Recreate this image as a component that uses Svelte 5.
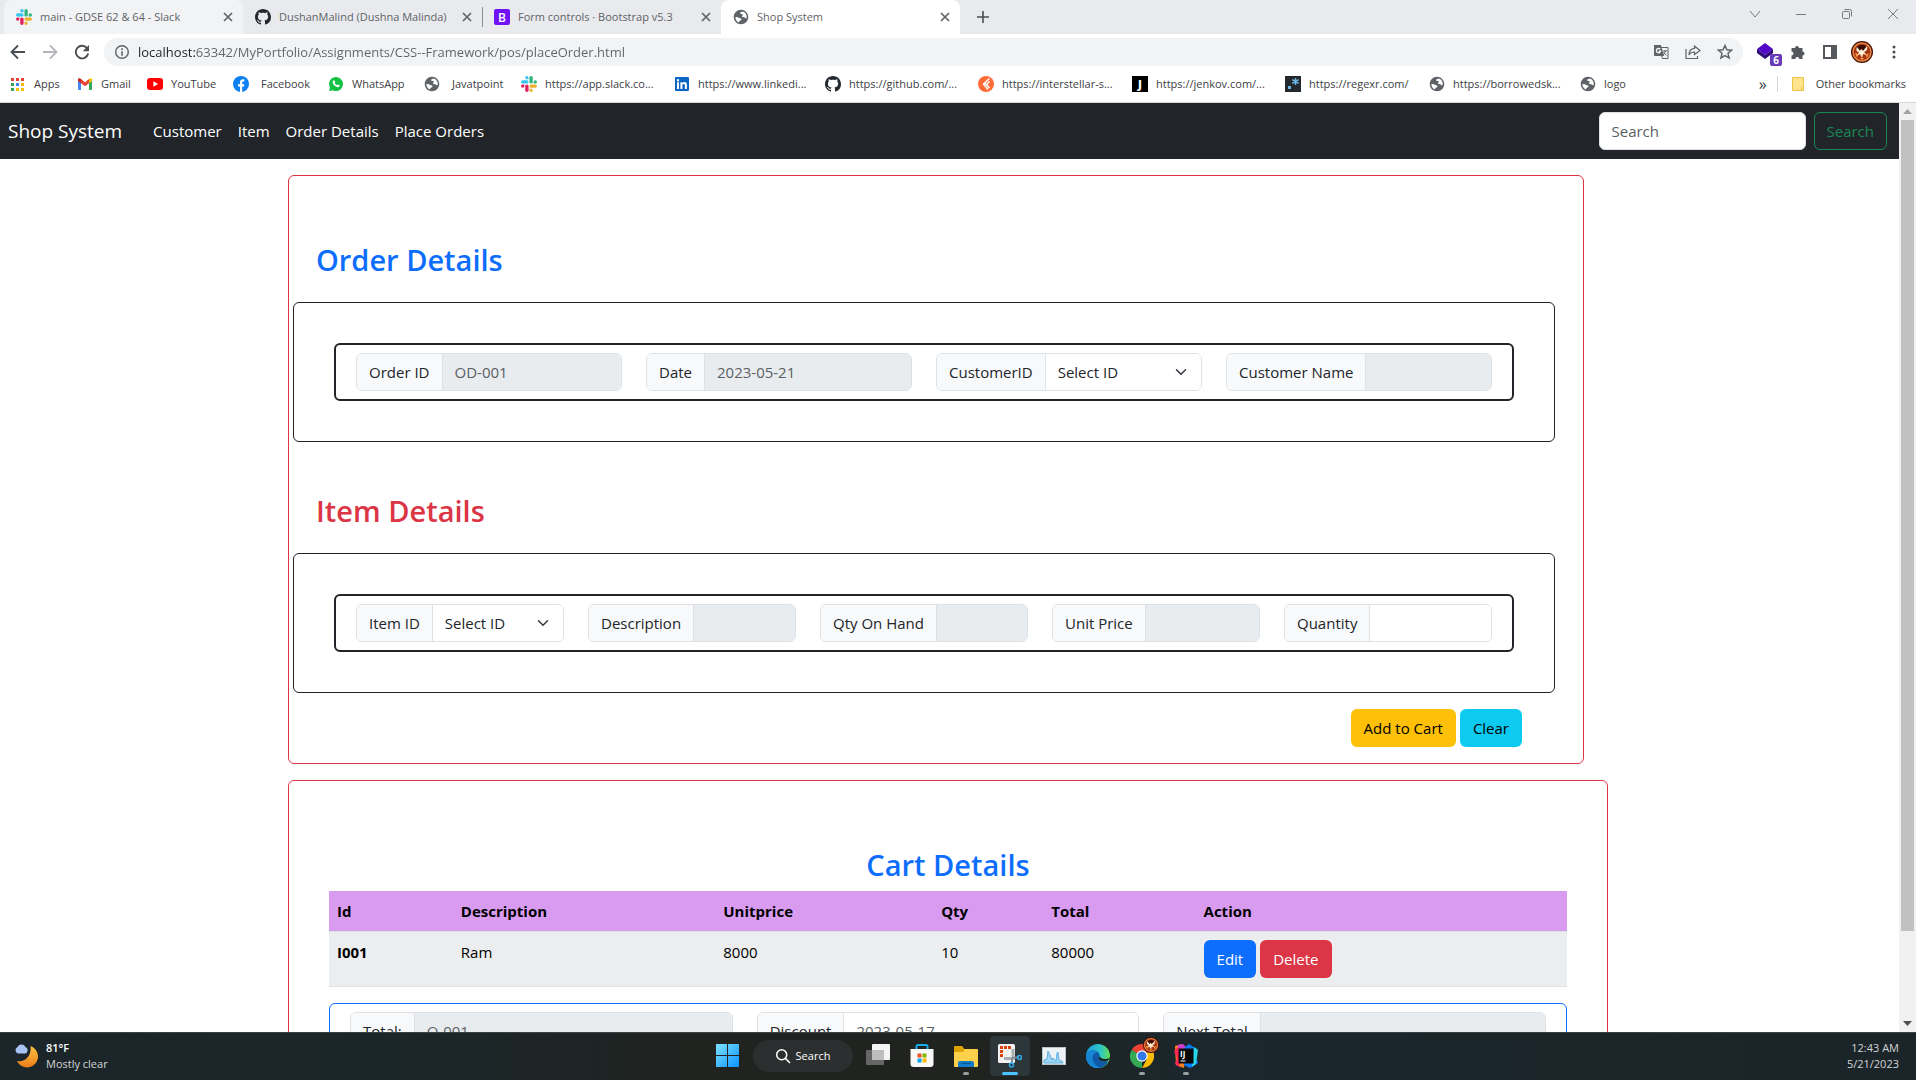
<script>
  const tabs = [
    { icon: 'slack', title: 'main - GDSE 62 & 64 - Slack', state: 'hovered' },
    { icon: 'github', title: 'DushanMalind (Dushna Malinda)', state: 'plain' },
    { icon: 'bootstrap', title: 'Form controls · Bootstrap v5.3', state: 'plain ruled' },
    { icon: 'globe', title: 'Shop System', state: 'active' },
  ];

  const bookmarks = [
    { icon: 'apps', title: 'Apps' },
    { icon: 'gmail', title: 'Gmail' },
    { icon: 'youtube', title: 'YouTube' },
    { icon: 'facebook', title: 'Facebook', wide: true },
    { icon: 'whatsapp', title: 'WhatsApp' },
    { icon: 'globe', title: 'Javatpoint', wide: true },
    { icon: 'slack', title: 'https://app.slack.co...' },
    { icon: 'linkedin', title: 'https://www.linkedi...' },
    { icon: 'github', title: 'https://github.com/...' },
    { icon: 'postman', title: 'https://interstellar-s...' },
    { icon: 'jenkov', title: 'https://jenkov.com/...' },
    { icon: 'regexr', title: 'https://regexr.com/' },
    { icon: 'globe', title: 'https://borrowedsk...' },
    { icon: 'globe', title: 'logo' },
  ];

  const navLinks = ['Customer', 'Item', 'Order Details', 'Place Orders'];

  const orderFields = [
    { id: 'order-id', label: 'Order ID', value: 'OD-001', kind: 'readonly' },
    { id: 'order-date', label: 'Date', value: '2023-05-21', kind: 'readonly' },
    { id: 'customer-id', label: 'CustomerID', value: 'Select ID', kind: 'select' },
    { id: 'customer-name', label: 'Customer Name', value: '', kind: 'readonly' },
  ];

  const itemFields = [
    { id: 'item-id', label: 'Item ID', value: 'Select ID', kind: 'select' },
    { id: 'description', label: 'Description', value: '', kind: 'readonly' },
    { id: 'qty-on-hand', label: 'Qty On Hand', value: '', kind: 'readonly' },
    { id: 'unit-price', label: 'Unit Price', value: '', kind: 'readonly' },
    { id: 'quantity', label: 'Quantity', value: '', kind: 'text' },
  ];

  const totalFields = [
    { id: 'total', label: 'Total:', value: 'O-001', kind: 'readonly' },
    { id: 'discount', label: 'Discount', value: '2023-05-17', kind: 'text' },
    { id: 'next-total', label: 'Next Total', value: '', kind: 'readonly' },
  ];

  const cart = [{ id: 'I001', description: 'Ram', price: 8000, qty: 10, total: 80000 }];

  const taskApps = [
    { icon: 'explorer', name: 'File Explorer', mark: 'running' },
    { icon: 'snip', name: 'Snipping Tool', mark: 'current' },
    { icon: 'monitor', name: 'Resource Monitor', mark: '' },
    { icon: 'edge', name: 'Edge', mark: '' },
    { icon: 'chrome', name: 'Chrome', mark: 'running' },
    { icon: 'idea', name: 'IntelliJ IDEA', mark: 'running' },
  ];
</script>

{#snippet glyph(name)}
  {#if name === 'slack'}
    <svg class="i16" viewBox="0 0 24 24">
      <path fill="#e01e5a" d="M5.042 15.165a2.528 2.528 0 0 1-2.52 2.523A2.528 2.528 0 0 1 0 15.165a2.527 2.527 0 0 1 2.522-2.52h2.52v2.52zM6.313 15.165a2.527 2.527 0 0 1 2.521-2.52 2.527 2.527 0 0 1 2.521 2.52v6.313A2.528 2.528 0 0 1 8.834 24a2.528 2.528 0 0 1-2.521-2.522v-6.313z" />
      <path fill="#36c5f0" d="M8.834 5.042a2.528 2.528 0 0 1-2.521-2.52A2.528 2.528 0 0 1 8.834 0a2.528 2.528 0 0 1 2.521 2.522v2.52H8.834zM8.834 6.313a2.528 2.528 0 0 1 2.521 2.521 2.528 2.528 0 0 1-2.521 2.521H2.522A2.528 2.528 0 0 1 0 8.834a2.528 2.528 0 0 1 2.522-2.521h6.312z" />
      <path fill="#2eb67d" d="M18.956 8.834a2.528 2.528 0 0 1 2.522-2.521A2.528 2.528 0 0 1 24 8.834a2.528 2.528 0 0 1-2.522 2.521h-2.522V8.834zM17.688 8.834a2.528 2.528 0 0 1-2.523 2.521 2.527 2.527 0 0 1-2.52-2.521V2.522A2.527 2.527 0 0 1 15.165 0a2.528 2.528 0 0 1 2.523 2.522v6.312z" />
      <path fill="#ecb22e" d="M15.165 18.956a2.528 2.528 0 0 1 2.523 2.522A2.528 2.528 0 0 1 15.165 24a2.527 2.527 0 0 1-2.52-2.522v-2.522h2.52zM15.165 17.688a2.527 2.527 0 0 1-2.52-2.523 2.526 2.526 0 0 1 2.52-2.52h6.313A2.527 2.527 0 0 1 24 15.165a2.528 2.528 0 0 1-2.522 2.523h-6.313z" />
    </svg>
  {:else if name === 'github'}
    <svg class="i16" viewBox="0 0 16 16"><path fill="#24292f" d="M8 0C3.58 0 0 3.58 0 8c0 3.54 2.29 6.53 5.47 7.59.4.07.55-.17.55-.38 0-.19-.01-.82-.01-1.49-2.01.37-2.53-.49-2.69-.94-.09-.23-.48-.94-.82-1.13-.28-.15-.68-.52-.01-.53.63-.01 1.08.58 1.23.82.72 1.21 1.87.87 2.33.66.07-.52.28-.87.51-1.07-1.78-.2-3.64-.89-3.64-3.95 0-.87.31-1.59.82-2.15-.08-.2-.36-1.02.08-2.12 0 0 .67-.21 2.2.82.64-.18 1.32-.27 2-.27s1.36.09 2 .27c1.53-1.04 2.2-.82 2.2-.82.44 1.1.16 1.92.08 2.12.51.56.82 1.27.82 2.15 0 3.07-1.87 3.75-3.65 3.95.29.25.54.73.54 1.48 0 1.07-.01 1.93-.01 2.2 0 .21.15.46.55.38A8.01 8.01 0 0016 8c0-4.42-3.58-8-8-8z" /></svg>
  {:else if name === 'bootstrap'}
    <svg class="i16" viewBox="0 0 16 16"><rect width="16" height="16" rx="2" fill="#7012f5" /><text x="8" y="12.5" text-anchor="middle" font-size="12" font-weight="600" fill="#fff">B</text></svg>
  {:else if name === 'globe'}
    <svg class="i16" viewBox="1 1 22 22"><circle cx="12" cy="12" r="9" fill="#fff" /><path fill="#5f6368" d="M12 2C6.48 2 2 6.48 2 12s4.48 10 10 10 10-4.48 10-10S17.52 2 12 2zM4.2 12.4c1.6-.5 3.400-.2 4.800.5 1.200.6 1.800 1 2.800 1.200.9.2 1.300.9.7 1.700-.6.9-1.900 1.100-2.600 1.800-.5.600-.4 1.400-.7 2C6.400 18.500 4.400 15.700 4.200 12.400zM19.600 13.800c-1.300.3-2.100-.5-3-1.300-.8-.7-1.900-.6-2.800-1-.7-.3-.7-1.200 0-1.600.8-.4 1-.8.500-1.500-.7-.8-2.200-.1-3-.8-.8-.8-.1-1.900.8-2.400 1-.5 2.300-.6 3.300-.4 2.600 1.200 4.500 3.800 4.500 7 0 .7-.1 1.400-.3 2z" /></svg>
  {:else if name === 'apps'}
    <svg class="i16" viewBox="0 0 16 16">
      <path fill="#ea4335" d="M1 2h3v3H1zM6 2h3v3H6zM11 2h3v3h-3z" /><path fill="#34a853" d="M1 7h3v3H1zM1 12h3v3H1z" /><path fill="#4285f4" d="M6 7h3v3H6z" /><path fill="#fbbc04" d="M11 7h3v3h-3zM6 12h3v3H6zM11 12h3v3h-3z" />
    </svg>
  {:else if name === 'gmail'}
    <svg class="i16" viewBox="0 0 16 16"><path fill="#4285f4" d="M1 4.500l3 2.300V14H2a1 1 0 0 1-1-1z" /><path fill="#34a853" d="M12 6.800l3-2.300V13a1 1 0 0 1-1 1h-2z" /><path fill="#ea4335" d="M4 3l4 3.200L12 3v4.200l-4 3.100-4-3.100z" /><path fill="#c5221f" d="M1 3.800C1 2.300 2.500 1.900 4 3v4.200L1 5z" /><path fill="#fbbc04" d="M15 3.800C15 2.300 13.500 1.900 12 3v4.200L15 5z" /></svg>
  {:else if name === 'youtube'}
    <svg class="i16" viewBox="0 0 16 16"><rect y="2" width="16" height="12" rx="3" fill="#f00" /><path fill="#fff" d="M6.400 5.300v5.400L11 8z" /></svg>
  {:else if name === 'facebook'}
    <svg class="i16" viewBox="0 0 16 16"><circle cx="8" cy="8" r="8" fill="#0d80f2" /><path fill="#fff" d="M7 16v-5.400H5V8.200h2V6.400c0-2 1.200-3.100 3-3.100.8 0 1.400.1 1.400.1v2h-1c-.9 0-1.200.6-1.200 1.200v1.600h2.200l-.4 2.400H9.200V16z" /></svg>
  {:else if name === 'whatsapp'}
    <svg class="i16" viewBox="0 0 16 16"><path fill="#12c143" d="M8 1a7 7 0 1 1-3.300 13.200L1 15l1-3.500A7 7 0 0 1 8 1z" /><path fill="#fff" d="M5.600 4.300c.5-.3.900-.1 1.100.4l.5 1.200c.1.400-.7 1-.6 1.200.5 1 1.300 1.700 2.300 2.200.3.100.8-.9 1.200-.7l1.400.7c.5.300-.2 1.900-1.500 2-1.900.1-5-2.300-5.300-4.700-.1-1 .3-1.900.9-2.300z" /></svg>
  {:else if name === 'linkedin'}
    <svg class="i16" viewBox="0 0 16 16"><rect x="1" y="1" width="14" height="14" rx="1" fill="#0a66c2" /><path fill="#fff" d="M3 6.300h2V13H3zM4 3a1.200 1.200 0 1 1 0 2.400A1.200 1.200 0 0 1 4 3zM6.400 6.300h1.900v.9c.4-.7 1.100-1.100 2-1.100 2 0 2.600 1.200 2.600 3V13h-2V9.600c0-.9-.2-1.700-1.100-1.700-1 0-1.400.7-1.400 1.700V13h-2z" /></svg>
  {:else if name === 'postman'}
    <svg class="i16" viewBox="0 0 16 16"><circle cx="8" cy="8" r="8" fill="#ff6c37" /><path fill="none" stroke="#fff" stroke-width="1.500" d="M11.500 2.500L5.500 8l4.500 5.500M11.500 5.500L8.500 8.500l3 3.500M5.500 8H8" /></svg>
  {:else if name === 'jenkov'}
    <svg class="i16" viewBox="0 0 16 16"><rect width="16" height="16" fill="#000" /><text x="8" y="12" text-anchor="middle" font-size="11" font-weight="800" fill="#fff">J</text></svg>
  {:else if name === 'regexr'}
    <svg class="i16" viewBox="0 0 16 16"><rect width="16" height="16" fill="#23272e" /><path fill="#6cb8e8" d="M3 10h3v3H3z" /><path stroke="#6cb8e8" stroke-width="1.500" d="M10.500 2v7M7.300 3.700l6.400 3.600M13.700 3.700L7.300 7.300" /></svg>
  {:else if name === 'close'}
    <svg class="i16" viewBox="0 0 16 16"><path stroke="#5f6368" stroke-width="1.700" d="M4 4l8 8M12 4l-8 8" /></svg>
  {:else if name === 'start'}
    <svg class="i24" viewBox="0 0 24 24"><defs><linearGradient id="win" x1="0" y1="0" x2="1" y2="1"><stop offset="0" stop-color="#7fe0ff" /><stop offset="1" stop-color="#0a94ff" /></linearGradient></defs><path fill="url(#win)" d="M0 0h11v11H0zM12 0h11v11H12zM0 12h11v11H0zM12 12h11v11H12z" /></svg>
  {:else if name === 'taskview'}
    <svg class="i24" viewBox="0 0 24 24"><rect x="6" y="0" width="18" height="16" rx="1" fill="#f4f4f4" /><rect x="0" y="6" width="18" height="15" rx="1" fill="#666" /><path fill="#bdbdbd" d="M6 6h12v10H6z" /></svg>
  {:else if name === 'store'}
    <svg class="i24" viewBox="0 0 24 24"><path fill="none" stroke="#12aef2" stroke-width="2" d="M6.500 6V2.500a1.500 1.500 0 0 1 1.500-1.500h8a1.500 1.500 0 0 1 1.500 1.500V6" /><path fill="#f7f7f7" d="M.5 5h23v15a3 3 0 0 1-3 3h-17a3 3 0 0 1-3-3z" /><path fill="#f25022" d="M7.500 9.500h4v4h-4z" /><path fill="#7fba00" d="M12.500 9.500h4v4h-4z" /><path fill="#00a4ef" d="M7.500 14.500h4v4h-4z" /><path fill="#ffb900" d="M12.500 14.500h4v4h-4z" /></svg>
  {:else if name === 'explorer'}
    <svg class="i24" viewBox="0 0 24 24"><path fill="#dca200" d="M0 3a1 1 0 0 1 1-1h7l2.500 3H23v5H0z" /><path fill="#ffd049" d="M0 8h9l2-3h12a1 1 0 0 1 1 1v16a1 1 0 0 1-1 1H1a1 1 0 0 1-1-1z" /><path fill="#117bc8" d="M4 23v-4a2 2 0 0 1 2-2h12a2 2 0 0 1 2 2v4z" /><path fill="#075493" d="M7 19h10v1H7z" /></svg>
  {:else if name === 'snip'}
    <svg class="i24" viewBox="0 0 24 24"><rect width="17" height="19" rx="1.500" fill="#f2f2f2" /><path fill="none" stroke="#d8410b" stroke-width="3" stroke-dasharray="3 1" d="M13 3.500H3.500V14" /><path fill="none" stroke="#a7adb1" stroke-width="3" d="M15 5v9.500H6" /><path stroke="#858d92" stroke-width="2" d="M14 14l7-1M14 14l0 6" /><circle cx="21.500" cy="13.500" r="2" fill="none" stroke="#33a7e8" stroke-width="1.600" /><circle cx="13.500" cy="21" r="2" fill="none" stroke="#33a7e8" stroke-width="1.600" /></svg>
  {:else if name === 'monitor'}
    <svg class="i24" viewBox="0 0 24 24"><rect x=".5" y="3.500" width="23" height="17" fill="#edf2f7" stroke="#b9c3cc" /><path fill="#9dd4f5" stroke="#5fb0e2" d="M2 19v-3l3-1 1-8 2 4 2 5 1-2 3 3 1-8 1-1 1 8 4 2v1z" /></svg>
  {:else if name === 'edge'}
    <svg class="i24" viewBox="0 0 24 24"><defs><linearGradient id="edge-top" x1="0" x2="1"><stop offset="0" stop-color="#1b9de2" /><stop offset=".6" stop-color="#2cc6c9" /><stop offset="1" stop-color="#62dc52" /></linearGradient></defs><circle cx="12" cy="12" r="12" fill="url(#edge-top)" /><path fill="#0f59a8" d="M0 12c0-3.500 4-6 8-5.500 4 .5 6 3 5.500 5.500-.2 1-.9 1.200-.9 2.300 0 1.400 2.400 3.200 5.400 3.200 2 0 3.600-.8 4.500-1.300C20.500 21 16.500 24 12 24 5 24 0 18.500 0 12z" /><path fill="#1785d4" d="M0 12c0-3.500 4-6 8-5.500 2 .2 3.500 1 4.500 2-5-.5-7 4-5.500 8 1 3.500 4 6 7 7.200C6 25.500 0 19.500 0 12z" /><path fill="#1b262b" d="M13.500 12c-.2 1-.9 1.200-.9 2.300 0 1.400 2.400 3.200 5.400 3.200 2.800 0 5.500-1.500 5.900-4.500-1.200 1.500-3 2.200-5.400 2-2.600-.2-4.200-1.300-5-3z" /></svg>
  {:else if name === 'chrome'}
    <svg class="i24" viewBox="0 0 24 24"><path fill="#ea4335" d="M12 12L1.600 6A12 12 0 0 1 22.400 6z" /><path fill="#34a853" d="M12 12v12A12 12 0 0 1 1.600 6z" /><path fill="#fbbc04" d="M12 12l10.400-6A12 12 0 0 1 12 24l5-9z" /><circle cx="12" cy="12" r="5.700" fill="#fff" /><circle cx="12" cy="12" r="4.500" fill="#3379ec" /></svg>
  {:else if name === 'idea'}
    <svg class="i24" viewBox="0 0 24 24"><path fill="#fc801d" d="M1 2l7-2 5 4-3 20-8-3z" /><path fill="#fe2857" d="M0 7l6-6 5 9-6 11 2 3-6-4 2-6z" /><path fill="#c93bd0" d="M3 1l6-1 4 4-6 3z" /><path fill="#087cfa" d="M10 4l5-4 9 6-3 5 3 8-8 5-6-3z" /><path fill="#27d6e5" d="M20 3l4 3-2 14-4 3z" /><path d="M4.500 4.500h15v15h-15z" fill="#080808" /><text x="6" y="13" font-size="8" font-weight="700" fill="#fff">IJ</text><path fill="#fff" d="M6.500 16.500h5v1h-5z" /></svg>
  {/if}
{/snippet}

{#snippet avatar(size)}
  <svg class={size} viewBox="0 0 22 22"><circle cx="11" cy="11" r="11" fill="#4a0d05" /><circle cx="11" cy="11" r="9" fill="#a83210" stroke="#e58a45" stroke-width="1.500" /><path fill="#3a0a05" d="M11 4a7 7 0 0 1 6 3l-4 3-2-2-3 3-3-4a7 7 0 0 1 6-3z" /><path fill="#fff3d8" d="M6 6l3 4 1-2 2 2 4-5c1 3 0 5-3 6l3 3-4-1-1 4-2-4-3 2 2-4C5 11 5 8 6 6z" /><path fill="#ffa64d" d="M4 12l3 1-1 4zM18 12l-3 2 1 3zM9 17h4l-2 2z" /></svg>
{/snippet}

{#snippet field(f)}
  <div class="group">
    <label for={f.id}>{f.label}</label>
    {#if f.kind === 'select'}
      <div class="pick">
        <select id={f.id}><option>{f.value}</option></select>
        <svg viewBox="0 0 16 16"><path fill="none" stroke="#343a40" stroke-linecap="round" stroke-linejoin="round" stroke-width="2" d="m2 5 6 6 6-6" /></svg>
      </div>
    {:else}
      <input id={f.id} type="text" placeholder={f.value} disabled={f.kind === 'readonly'} />
    {/if}
  </div>
{/snippet}

<div class="screen">
  <header class="browser">
    <div class="tabstrip">
      {#each tabs as tab}
        <div class="tab {tab.state}">
          {@render glyph(tab.icon)}
          <button class="title">{tab.title}</button>
          <button class="bare" aria-label="Close tab">{@render glyph('close')}</button>
        </div>
      {/each}
      <button class="bare newtab" aria-label="New tab"><svg class="i16" viewBox="0 0 16 16"><path stroke="#4a4d51" stroke-width="1.600" d="M8 2v12M2 8h12" /></svg></button>
      <div class="window">
        <button class="bare" aria-label="Search tabs"><svg class="i12" viewBox="0 0 12 12"><path d="M1 3l5 6 5-6" /></svg></button>
        <button class="bare" aria-label="Minimize"><svg class="i12" viewBox="0 0 12 12"><path d="M1 6.500h10" /></svg></button>
        <button class="bare" aria-label="Restore"><svg class="i12" viewBox="0 0 12 12"><rect x="1.500" y="3.500" width="7" height="7" rx="1" /><path d="M3.500 1.500h5a2 2 0 0 1 2 2v5" /></svg></button>
        <button class="bare" aria-label="Close"><svg class="i12" viewBox="0 0 12 12"><path d="M1 1l10 10M11 1L1 11" /></svg></button>
      </div>
    </div>

    <div class="toolbar">
      <button class="bare tool" aria-label="Back"><svg class="i16" viewBox="0 0 16 16"><path fill="none" stroke="#4a4d51" stroke-width="1.800" d="M15 8H2M8 1.500L1.500 8 8 14.500" /></svg></button>
      <button class="bare tool" aria-label="Forward"><svg class="i16" viewBox="0 0 16 16"><path fill="none" stroke="#b4b6b9" stroke-width="1.800" d="M1 8h13M8 1.500L14.500 8 8 14.500" /></svg></button>
      <button class="bare tool" aria-label="Reload"><svg class="i16" viewBox="0 0 16 16"><path fill="none" stroke="#4a4d51" stroke-width="1.900" d="M13.300 4.500A6.300 6.300 0 1 0 14.200 9.500" /><path fill="#4a4d51" d="M15 1v6.300H8.700z" /></svg></button>
      <div class="omnibox">
        <svg class="i16" viewBox="0 0 16 16"><circle cx="8" cy="8" r="6.300" fill="none" stroke="#5f6368" stroke-width="1.400" /><path fill="#5f6368" d="M7.200 4.300h1.600v1.600H7.200zM7.200 7.200h1.600v4.500H7.200z" /></svg>
        <input type="text" aria-label="Address" value="localhost:63342/MyPortfolio/Assignments/CSS--Framework/pos/placeOrder.html" />
        <button class="bare tool" aria-label="Translate"><svg class="i16" viewBox="0 0 16 16"><path fill="#5f6368" d="M1 1h7l3 11H2a1 1 0 0 1-1-1z" /><path fill="none" stroke="#5f6368" d="M8 3.500h7v11H9.500l-1-3M10 7h4M12 6v1c0 2-1 3-2 4M10.500 8.500l3 3" /><path fill="none" stroke="#fff" stroke-width="1.200" d="M7.300 5.200a2.200 2.200 0 1 0 .4 2H5.500" /></svg></button>
        <button class="bare tool" aria-label="Share"><svg class="i16" viewBox="0 0 16 16"><path fill="none" stroke="#5f6368" stroke-width="1.200" d="M1 5v9.500h11.500V12M9.500 2l5.500 4.500-5.500 4V8C7 8 5 9 4 11c0-4 2-6.300 5.500-6.600z" /></svg></button>
        <button class="bare tool" aria-label="Bookmark"><svg class="i16" viewBox="0 0 16 16"><path fill="none" stroke="#5f6368" stroke-width="1.500" d="M8 1.500l1.900 4.300 4.700.4-3.600 3.100 1.100 4.600L8 11.500l-4.100 2.400L5 9.300 1.400 6.200l4.700-.4z" /></svg></button>
      </div>
      <button class="bare tool ext" aria-label="Extension, 6 alerts"><svg class="i20" viewBox="0 0 20 20"><path fill="#5208c9" d="M9 1l8 6-8 6-8-6z" /><path fill="#2f0b75" d="M1 7l8 6 8-6v4l-8 6-8-6z" /></svg><span class="badge">6</span></button>
      <button class="bare tool" aria-label="Extensions"><svg class="i16" viewBox="0 0 16 16"><path fill="#55585c" d="M1.500 4H5a2 2 0 1 1 4 0h3.500v3.500a2 2 0 1 1 0 4V15H9.300a2 2 0 0 0-4 0H1.500v-3.500a2 2 0 0 0 0-4z" /></svg></button>
      <button class="bare tool" aria-label="Side panel"><svg class="i16" viewBox="0 0 16 16"><path fill="none" stroke="#55585c" stroke-width="2" d="M2 2h12v12H2z" /><path fill="#55585c" d="M9 2h5v12H9z" /></svg></button>
      <button class="bare tool" aria-label="Profile">{@render avatar('i22')}</button>
      <button class="bare tool" aria-label="Menu"><svg class="i16" viewBox="0 0 16 16"><g fill="#4a4d51"><circle cx="8" cy="3" r="1.500" /><circle cx="8" cy="8" r="1.500" /><circle cx="8" cy="13" r="1.500" /></g></svg></button>
    </div>

    <nav class="bookmarks" aria-label="Bookmarks">
      <div class="marks">
        {#each bookmarks as mark}
          <a href="#top" class:wide={mark.wide}>{@render glyph(mark.icon)}<span>{mark.title}</span></a>
        {/each}
      </div>
      <button class="bare more" aria-label="More bookmarks">»</button>
      <a href="#top" class="other"><svg class="i16" viewBox="0 0 16 16"><path fill="#ffe38f" stroke="#ecc546" d="M2.500 1.500h11v13h-11zM11.500 10.500v4" /></svg><span>Other bookmarks</span></a>
    </nav>
  </header>

  <div class="viewport">
    <div class="page" id="top">
      <nav class="navbar">
        <a class="brand" href="#top">Shop System</a>
        {#each navLinks as link}<a href="#top">{link}</a>{/each}
        <form class="search">
          <input type="search" placeholder="Search" aria-label="Search" />
          <button type="button">Search</button>
        </form>
      </nav>

      <main>
        <section class="card entry">
          <h2 class="blue">Order Details</h2>
          <div class="frame"><div class="fields four">{#each orderFields as f}{@render field(f)}{/each}</div></div>
          <h2 class="red">Item Details</h2>
          <div class="frame"><div class="fields five">{#each itemFields as f}{@render field(f)}{/each}</div></div>
          <div class="actions">
            <button class="btn warning">Add to Cart</button>
            <button class="btn info">Clear</button>
          </div>
        </section>

        <section class="card cart">
          <h2 class="blue">Cart Details</h2>
          <table>
            <colgroup><col class="c-id" /><col class="c-desc" /><col class="c-price" /><col class="c-qty" /><col class="c-total" /><col /></colgroup>
            <thead>
              <tr><th>Id</th><th>Description</th><th>Unitprice</th><th>Qty</th><th>Total</th><th>Action</th></tr>
            </thead>
            <tbody>
              {#each cart as row}
                <tr>
                  <th scope="row">{row.id}</th><td>{row.description}</td><td>{row.price}</td><td>{row.qty}</td><td>{row.total}</td>
                  <td><div class="rowbtns"><button class="btn primary">Edit</button><button class="btn danger">Delete</button></div></td>
                </tr>
              {/each}
            </tbody>
          </table>
          <div class="totals">{#each totalFields as f}{@render field(f)}{/each}</div>
        </section>
      </main>
    </div>

    <div class="scrollbar" aria-hidden="true">
      <svg viewBox="0 0 17 17"><path fill="#a3a3a3" d="M4 11l4.500-5 4.500 5z" /></svg>
      <div class="thumb"></div>
      <svg viewBox="0 0 17 17"><path fill="#505050" d="M4 6l4.500 5L13 6z" /></svg>
    </div>
  </div>

  <footer class="taskbar">
    <div class="weather">
      <svg class="i24" viewBox="0 0 24 24"><defs><linearGradient id="moon" x1="0" y1="0" x2="0" y2="1"><stop offset="0" stop-color="#f9c440" /><stop offset="1" stop-color="#ee7c1b" /></linearGradient></defs><path fill="url(#moon)" d="M16.500 2A11 11 0 1 1 3 17C11 19 18 11 16.500 2z" /><path fill="#a9c3f5" d="M4 9.500a3.500 3.500 0 0 1-.5-6.500 4.500 4.500 0 0 1 8 0 3.400 3.400 0 0 1-.5 6.500z" /></svg>
      <div><strong>81°F</strong><span>Mostly clear</span></div>
    </div>
    <div class="apps">
      <button class="bare app" aria-label="Start">{@render glyph('start')}</button>
      <button class="find"><svg class="i16" viewBox="0 0 16 16"><circle cx="6.700" cy="6.700" r="5" fill="none" stroke="#fff" stroke-width="1.500" /><path stroke="#fff" stroke-width="1.700" stroke-linecap="round" d="M10.500 10.500L14.500 14.500" /></svg>Search</button>
      <button class="bare app" aria-label="Task view">{@render glyph('taskview')}</button>
      <button class="bare app" aria-label="Microsoft Store">{@render glyph('store')}</button>
      {#each taskApps as app}
        <button class="bare app {app.mark}" aria-label={app.name}>
          {@render glyph(app.icon)}
          {#if app.icon === 'chrome'}<span class="face">{@render avatar('i16')}</span>{/if}
        </button>
      {/each}
    </div>
    <div class="clock"><span>12:43 AM</span><span>5/21/2023</span></div>
  </footer>
</div>

<style>
  :global(body) { margin: 0; background: #fff; }
  .screen, .screen * { box-sizing: border-box; }
  .screen { height: 100vh; display: flex; flex-direction: column; overflow: hidden; font-family: 'Open Sans', 'Noto Sans', sans-serif; font-size: 15px; line-height: 24px; color: #212529; }
  button, input, select { font: inherit; color: inherit; margin: 0; min-width: 0; }
  a { color: inherit; text-decoration: none; }
  svg { display: block; flex: none; }
  .i12 { width: 12px; height: 12px; }
  .i16 { width: 16px; height: 16px; }
  .i20 { width: 20px; height: 20px; }
  .i22 { width: 22px; height: 22px; }
  .i24 { width: 24px; height: 24px; }
  .bare { border: 0; background: none; padding: 0; display: grid; place-items: center; flex: none; }

  .browser { flex: none; background: #fff; border-bottom: 1px solid #d5d7da; font-size: 11px; line-height: 16px; color: #3c4043; }
  .tabstrip { height: 34px; display: flex; background: #e8eaed; padding-left: 4px; }
  .tab { width: 239px; display: flex; align-items: center; gap: 8px; padding: 0 7px 0 12px; border-radius: 8px 8px 0 0; }
  .tab.hovered { background: #f2f3f5; }
  .tab.active { background: #fff; }
  .tab.ruled { background: linear-gradient(#8a8d91, #8a8d91) 0 50% / 1px 20px no-repeat; }
  .tab .title { flex: 1; border: 0; background: none; padding: 0; text-align: left; white-space: nowrap; overflow: hidden; color: #5f6368; }
  .newtab { width: 46px; }
  .window { margin-left: auto; display: flex; padding-bottom: 6px; }
  .window .bare { width: 46px; }
  .window svg { fill: none; stroke: #777a7e; }
  .toolbar { display: flex; align-items: center; height: 36px; padding: 0 6px 0 2px; }
  .tool { width: 32px; height: 28px; }
  .omnibox { flex: 1; display: flex; align-items: center; height: 28px; margin: 0 7px 0 6px; padding: 0 2px 0 10px; border-radius: 14px; background: #f1f3f4; }
  .omnibox input { flex: 1; border: 0; outline: 0; padding: 0 8px; font-size: 13px; line-height: 20px; color: transparent; background: linear-gradient(90deg, #202124 66px, #5f6368 66px); background-clip: text; -webkit-background-clip: text; }
  .ext { position: relative; }
  .badge { position: absolute; right: 0; bottom: 0; width: 12px; height: 12px; border-radius: 2px; background: #673ab7; color: #fff; font-size: 10px; font-weight: 700; line-height: 12px; }
  .bookmarks { display: flex; align-items: center; height: 32px; padding: 0 10px 4px; }
  .marks { flex: 1; display: grid; align-items: center; grid-template-columns: 67px 70px 86px 95px 96px 97px 153px 151px 153px 154px 153px 144px 151px 1fr; }
  .bookmarks a { display: flex; align-items: center; gap: 8px; white-space: nowrap; }
  .bookmarks a.wide { gap: 12px; }
  .more { width: 20px; font-size: 16px; }
  .bookmarks .other { border-left: 1px solid #d5d7da; margin-left: 4px; padding-left: 12px; gap: 10px; }

  .viewport { flex: 1; min-height: 0; display: flex; }
  .page { flex: 1; min-width: 0; overflow: hidden; }
  .navbar { display: flex; align-items: center; gap: 16px; height: 56px; padding: 0 12px 0 8px; background: #212529; color: #fff; }
  .brand { font-size: 19px; margin-right: 15px; }
  .search { margin-left: auto; display: flex; gap: 8px; }
  .search input { width: 207px; height: 38px; padding: 0 12px; border: 1px solid #dee2e6; border-radius: 6px; background: #fff; }
  .search button { height: 38px; padding: 0 12px; border: 1px solid #198754; border-radius: 6px; background: none; color: #198754; }
  ::placeholder { color: #595f65; opacity: 1; }

  main { max-width: 1323px; margin: 0 auto; padding: 16px 3px 0 0; }
  .card { border: 1px solid #dc3545; border-radius: 6px; margin-bottom: 16px; }
  h2 { margin: 0; font-size: 29px; line-height: 38px; font-weight: 600; }
  .blue { color: #0d6efd; }
  .red { color: #dc3545; }
  .entry { margin-right: 24px; padding: 15px 28px 16px 4px; }
  .entry h2 { padding: 50px 0 23px 23px; }
  .frame { border: 1px solid #212529; border-radius: 6px; padding: 40px; }
  .fields { display: grid; gap: 24px; border: 2px solid #212529; border-radius: 6px; padding: 8px 20px; }
  .four { grid-template-columns: repeat(4, minmax(0, 1fr)); }
  .five { grid-template-columns: repeat(5, minmax(0, 1fr)); }
  .group { display: flex; height: 38px; border: 1px solid #dee2e6; border-radius: 6px; overflow: hidden; background: #fff; }
  .group label { flex: none; padding: 6px 12px; line-height: 24px; background: #f8f9fa; border-right: 1px solid #dee2e6; white-space: nowrap; }
  .group input { flex: 1; border: 0; padding: 0 12px; background: #fff; }
  .group input:disabled { background: #e9ecef; }
  .pick { flex: 1; min-width: 0; display: grid; align-items: center; }
  .pick select, .pick svg { grid-area: 1 / 1; }
  .pick select { appearance: none; width: 100%; height: 36px; border: 0; padding: 0 36px 0 12px; background: #fff; }
  .pick svg { width: 12px; height: 12px; justify-self: end; margin-right: 14px; pointer-events: none; }
  .actions { display: flex; justify-content: flex-end; gap: 4px; padding: 16px 33px 0 0; }
  .btn { height: 38px; padding: 0 13px; border: 0; border-radius: 6px; }
  .warning { background: #ffc107; color: #000; }
  .info { background: #0dcaf0; color: #000; }
  .primary { background: #0d6efd; color: #fff; }
  .danger { background: #dc3545; color: #fff; }
  .cart { padding: 65px 40px 40px; }
  .cart h2 { text-align: center; margin-bottom: 7px; }
  table { width: 100%; table-layout: fixed; border-collapse: collapse; color: #000; }
  .c-id { width: 10%; }
  .c-desc { width: 21.2%; }
  .c-price { width: 17.6%; }
  .c-qty { width: 8.9%; }
  .c-total { width: 12.3%; }
  th, td { padding: 8px; text-align: left; vertical-align: top; border-bottom: 1px solid #dee2e6; }
  thead { background: #d99bf0; }
  tbody { background: #ebedee; }
  .rowbtns { display: flex; gap: 4px; }
  .totals { display: grid; grid-template-columns: repeat(3, minmax(0, 1fr)); gap: 24px; margin-top: 16px; padding: 8px 20px; border: 1px solid #0d6efd; border-radius: 6px; }

  .scrollbar { width: 17px; flex: none; display: flex; flex-direction: column; background: #f1f1f1; }
  .scrollbar svg { width: 17px; height: 17px; }
  .thumb { height: 811px; max-height: calc(100% - 36px); margin: 0 2px auto; background: #c1c1c1; }

  .taskbar { flex: none; height: 48px; display: grid; grid-template-columns: 1fr auto 1fr; align-items: center; padding: 0 17px 1px 14px; border-top: 1px solid #3b4244; background: linear-gradient(90deg, #1c2529, #1b262b 20%, #20231f 38%, #202320 52%, #1b272d 62%, #1b2428); color: #fff; font-size: 11px; line-height: 16px; }
  .weather { display: flex; align-items: center; gap: 8px; }
  .weather div, .clock { display: flex; flex-direction: column; }
  .weather strong { font-weight: 600; }
  .weather span, .clock { color: #d3d6d7; }
  .clock { text-align: right; }
  .apps { display: flex; align-items: center; }
  .app { position: relative; width: 44px; height: 40px; }
  .find { display: flex; align-items: center; justify-content: center; gap: 5px; width: 100px; height: 32px; margin: 0 3px; padding: 0; border: 0; border-radius: 16px; background: #2c2f2f; }
  .app.current { width: 40px; margin: 0 2px; border-radius: 4px; background: #2d363a; }
  .running::after, .current::after { content: ''; position: absolute; bottom: 1px; left: 50%; width: 6px; height: 3px; margin-left: -3px; border-radius: 2px; background: #999e9f; }
  .current::after { width: 16px; margin-left: -8px; background: #4cc2ff; }
  .face { position: absolute; right: 5px; top: 1px; }
</style>
